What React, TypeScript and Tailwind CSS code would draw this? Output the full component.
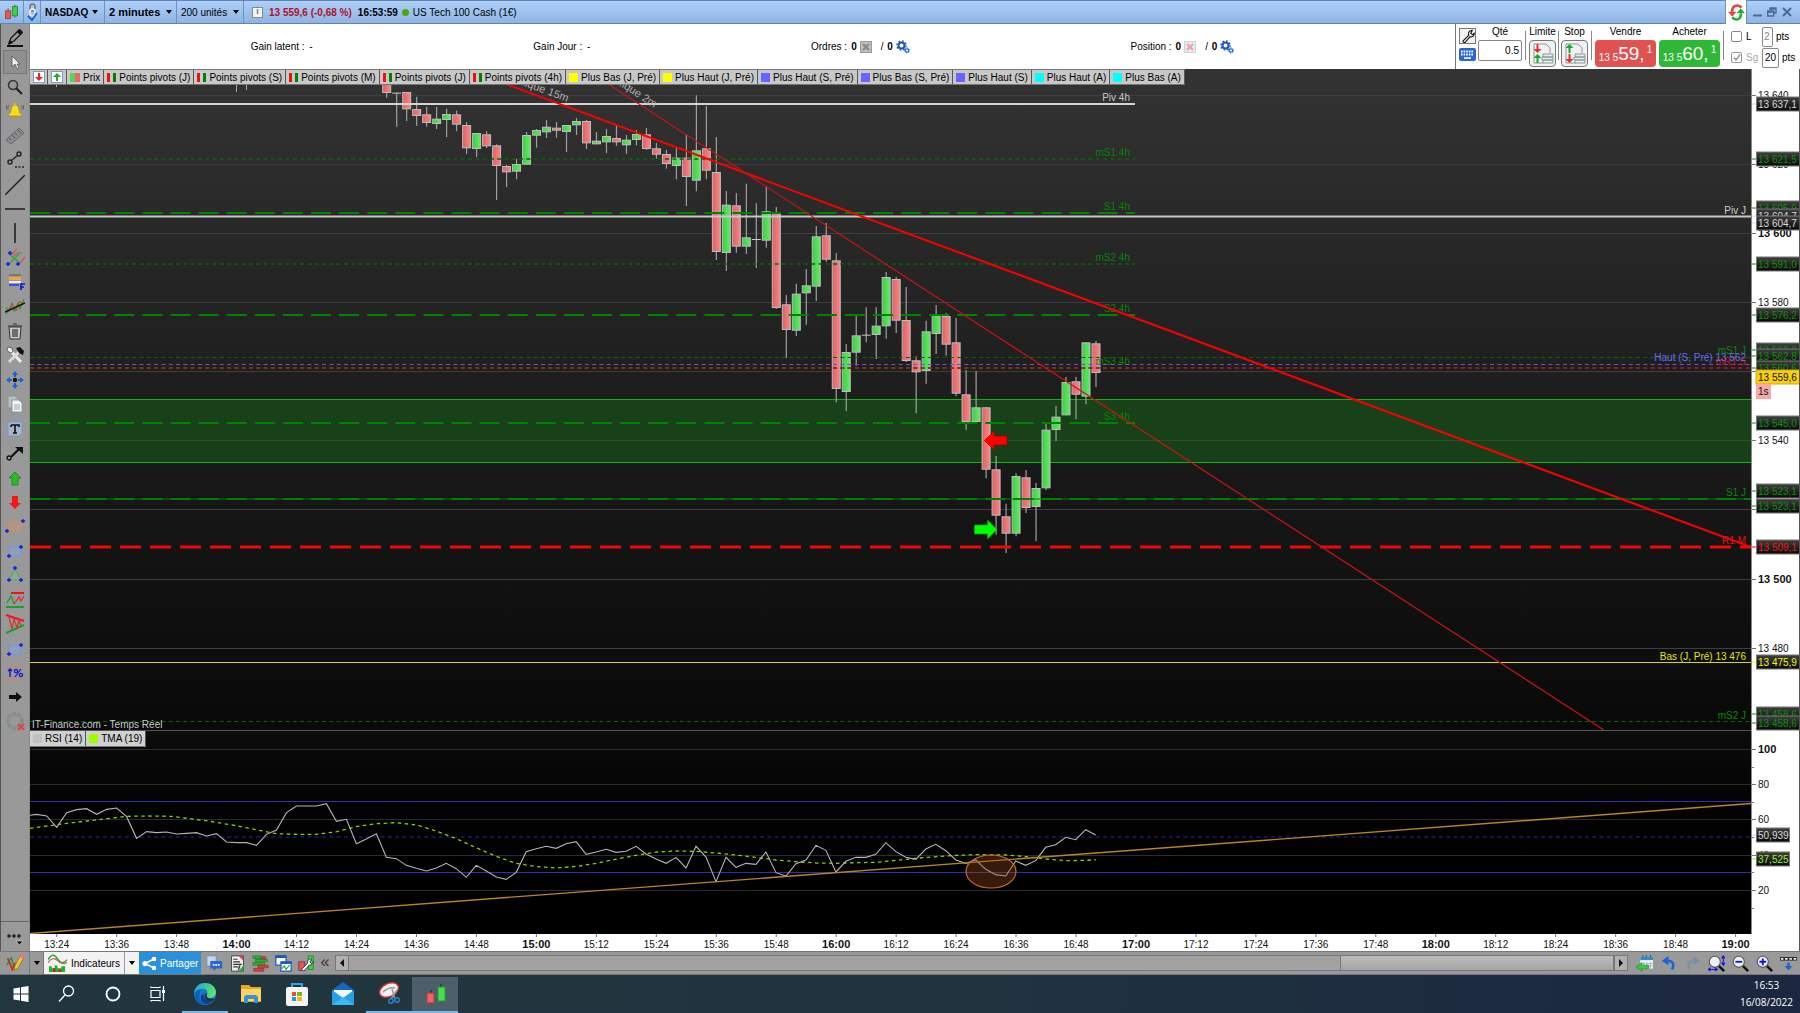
import { type ReactNode } from "react";
import clsx from "clsx";

// high, body top, body bottom, low: thirds of a pixel below the first grid row
type Candle = [number, number, number, number, "up" | "down" | "flat"];

const STEP = 9.99;
const FIRST_X = 356.7;

const candles: Candle[] = [
  [0, 0, 39, 53, "down"],
  [38, 38, 41, 140, "flat"],
  [36, 36, 88, 123, "down"],
  [50, 87, 108, 137, "down"],
  [80, 103, 129, 140, "down"],
  [80, 116, 132, 147, "up"],
  [86, 102, 120, 171, "up"],
  [92, 103, 134, 154, "down"],
  [126, 135, 205, 221, "down"],
  [159, 159, 207, 231, "up"],
  [154, 163, 199, 204, "down"],
  [193, 196, 258, 360, "down"],
  [255, 258, 277, 321, "down"],
  [237, 252, 275, 298, "up"],
  [156, 165, 254, 254, "up"],
  [147, 150, 167, 203, "up"],
  [120, 140, 157, 174, "up"],
  [126, 143, 152, 173, "down"],
  [135, 135, 156, 216, "up"],
  [114, 123, 136, 165, "up"],
  [120, 123, 190, 207, "down"],
  [156, 182, 193, 193, "up"],
  [147, 168, 187, 219, "up"],
  [135, 174, 187, 198, "down"],
  [165, 179, 196, 221, "up"],
  [150, 162, 180, 196, "up"],
  [144, 163, 207, 210, "down"],
  [189, 205, 224, 236, "down"],
  [210, 222, 252, 266, "down"],
  [203, 233, 258, 298, "up"],
  [163, 233, 291, 378, "down"],
  [46, 211, 302, 334, "up"],
  [78, 205, 272, 298, "down"],
  [171, 276, 516, 540, "down"],
  [333, 374, 519, 573, "up"],
  [339, 376, 500, 518, "down"],
  [311, 472, 500, 522, "up"],
  [370, 477, 480, 564, "flat"],
  [320, 394, 482, 503, "up"],
  [381, 400, 684, 687, "down"],
  [645, 673, 750, 835, "down"],
  [611, 641, 752, 768, "up"],
  [567, 616, 640, 734, "up"],
  [438, 469, 620, 663, "up"],
  [429, 466, 539, 545, "down"],
  [519, 541, 927, 967, "down"],
  [792, 816, 936, 993, "up"],
  [708, 766, 818, 857, "up"],
  [682, 764, 767, 787, "flat"],
  [682, 737, 765, 837, "up"],
  [576, 591, 739, 776, "up"],
  [590, 597, 722, 759, "down"],
  [621, 720, 843, 846, "down"],
  [829, 841, 877, 1000, "down"],
  [722, 754, 873, 911, "up"],
  [675, 702, 762, 822, "up"],
  [699, 708, 794, 827, "down"],
  [714, 787, 941, 949, "down"],
  [870, 943, 1026, 1050, "down"],
  [873, 982, 1026, 1026, "up"],
  [982, 982, 1169, 1195, "down"],
  [1128, 1168, 1307, 1364, "down"],
  [1271, 1309, 1361, 1419, "down"],
  [1180, 1188, 1361, 1369, "up"],
  [1170, 1192, 1284, 1299, "down"],
  [1209, 1224, 1281, 1384, "up"],
  [1032, 1049, 1225, 1231, "up"],
  [978, 1010, 1050, 1083, "up"],
  [891, 906, 1006, 1006, "up"],
  [891, 904, 944, 1018, "down"],
  [787, 787, 950, 973, "up"],
  [782, 790, 879, 921, "down"],
];

const rsi = [
  343, 348, 382, 338, 329, 326, 343, 328, 324, 350, 415, 395, 398, 396, 402,
  400, 398, 408, 401, 426, 428, 428, 436, 403, 390, 338, 318, 318, 318, 311,
  364, 358, 431, 417, 401, 472, 476, 496, 505, 513, 504, 490, 506, 532, 496,
  513, 531, 538, 517, 455, 446, 439, 445, 431, 425, 463, 456, 448, 457, 454,
  439, 462, 477, 490, 472, 504, 439, 471, 545, 472, 502, 490, 493, 456, 518,
  528, 491, 480, 436, 451, 516, 484, 472, 472, 463, 428, 455, 472, 478, 447,
  433, 452, 480, 490, 480, 508, 524, 528, 483, 496, 482, 442, 434, 412, 419,
  389, 405,
];

const tma = [
  [0, 385], [37, 370], [77, 356], [97, 349], [117, 348], [141, 349],
  [176, 362], [206, 377], [226, 389], [246, 401], [267, 403], [286, 403],
  [307, 395], [326, 380], [347, 371], [366, 368], [387, 375], [406, 393],
  [427, 417], [446, 443], [467, 470], [486, 490], [507, 500], [526, 504],
  [547, 499], [566, 490], [587, 477], [606, 466], [627, 456], [646, 453],
  [666, 454], [686, 459], [706, 465], [726, 472], [746, 480], [766, 485],
  [786, 489], [806, 490], [826, 488], [846, 487], [866, 481], [886, 475],
  [906, 470], [926, 466], [946, 464], [976, 465], [996, 470], [1016, 477],
  [1036, 482], [1056, 481], [1066, 479],
];

const gridRows = [26, 95, 164, 233, 302, 371, 440, 510, 579];

const times = [
  "13:24", "13:36", "13:48", "14:00", "14:12", "14:24", "14:36", "14:48",
  "15:00", "15:12", "15:24", "15:36", "15:48", "16:00", "16:12", "16:24",
  "16:36", "16:48", "17:00", "17:12", "17:24", "17:36", "17:48", "18:00",
  "18:12", "18:24", "18:36", "18:48", "19:00",
];

const legend = [
  { label: "Prix", kind: "candle" },
  { label: "Points pivots (J)", kind: "pivot" },
  { label: "Points pivots (S)", kind: "pivot" },
  { label: "Points pivots (M)", kind: "pivot" },
  { label: "Points pivots (J)", kind: "pivot" },
  { label: "Points pivots (4h)", kind: "pivot" },
  { label: "Plus Bas (J, Pré)", kind: "yellow" },
  { label: "Plus Haut (J, Pré)", kind: "yellow" },
  { label: "Plus Haut (S, Pré)", kind: "blue" },
  { label: "Plus Bas (S, Pré)", kind: "blue" },
  { label: "Plus Haut (S)", kind: "blue" },
  { label: "Plus Haut (A)", kind: "cyan" },
  { label: "Plus Bas (A)", kind: "cyan" },
];

// level lines of the pivots that stop at the end of the 4h session
const sessionLevels = [
  { y: 90, label: "mS1 4h", long: false },
  { y: 144, label: "S1 4h", long: true },
  { y: 195, label: "mS2 4h", long: false },
  { y: 246, label: "S2 4h", long: true },
  { y: 299, label: "mS3 4h", long: false },
  { y: 354, label: "S3 4h", long: true },
];

const priceTags = [
  { y: 35, text: "13 637,1", color: "#d8d8d8" },
  { y: 90, text: "13 621,5", color: "#0a900a" },
  { y: 139, text: "13 605,9", color: "#0a900a" },
  { y: 147, text: "13 604,7", color: "#d8d8d8" },
  { y: 154, text: "13 604,7", color: "#d8d8d8" },
  { y: 195, text: "13 591,0", color: "#0a900a" },
  { y: 246, text: "13 576,2", color: "#0a900a" },
  { y: 281, text: "13 562,8", color: "#0a900a" },
  { y: 287, text: "13 562,8", color: "#0a900a" },
  { y: 299, text: "13 560,6", color: "#0a900a" },
  { y: 354, text: "13 545,0", color: "#0a900a" },
  { y: 422, text: "13 523,1", color: "#0a900a" },
  { y: 437, text: "13 523,1", color: "#0a900a" },
  { y: 478, text: "13 509,1", color: "#f01414" },
  { y: 593, text: "13 475,9", color: "#f0f010" },
  { y: 645, text: "13 458,6", color: "#0a900a" },
  { y: 654, text: "13 458,6", color: "#0a900a" },
];

function Icon({
  children,
  size = 20,
  box = 20,
}: {
  children: ReactNode;
  size?: number;
  box?: number;
}) {
  return (
    <svg
      width={size}
      height={size}
      viewBox={`0 0 ${box} ${box}`}
      fill="none"
      className="shrink-0"
      aria-hidden="true"
    >
      {children}
    </svg>
  );
}

function Cross({ x, y }: { x: number; y: number }) {
  return (
    <path
      d={`M${x - 2} ${y}h4M${x} ${y - 2}v4`}
      stroke="#1515e8"
      strokeWidth="1.3"
    />
  );
}

const candlesIcon = (
  <>
    <path d="M6 5v13M14 1v15" stroke="#444" />
    <rect x="3" y="8" width="6" height="9" fill="#e05a60" stroke="#a83a40" />
    <rect x="11" y="3" width="6" height="11" fill="#3fd04a" stroke="#1e8a28" />
  </>
);

const rectIcon = (
  <>
    <rect x="4" y="6" width="12" height="9" fill="#8f9fb8" stroke="#6a96e8" />
    <Cross x={4} y={15} />
    <Cross x={16} y={6} />
  </>
);

const gears = (
  <Icon size={14} box={14}>
    <circle cx="5.5" cy="5.5" r="3" stroke="#1d55b8" strokeWidth="2" />
    <circle cx="5.5" cy="5.5" r="4.6" stroke="#1d55b8" strokeWidth="1.4" strokeDasharray="1.8 1.8" />
    <circle cx="11" cy="10.5" r="1.7" stroke="#2c72dc" strokeWidth="1.2" />
    <circle cx="11" cy="10.5" r="2.6" stroke="#2c72dc" strokeDasharray="1 1" />
  </Icon>
);

const tools: { name: string; icon: ReactNode }[] = [
  {
    name: "Dessin",
    icon: (
      <>
        <path d="M4 15l2-5 8-8 3 3-8 8z" stroke="#111" strokeWidth="1.3" />
        <path d="M12 4l3-3 3 3-3 3zM3 17l2-5 3 3zM2 17h16v2H2z" fill="#111" />
      </>
    ),
  },
  {
    name: "Curseur",
    icon: <path d="M7 4v11l3-3 2 5 2-1-2-4h3z" fill="#eee" stroke="#555" strokeWidth=".8" />,
  },
  {
    name: "Zoom",
    icon: (
      <>
        <circle cx="8" cy="8" r="4.5" stroke="#333" strokeWidth="1.5" />
        <path d="M11 11l6 6" stroke="#222" strokeWidth="2.2" />
      </>
    ),
  },
  {
    name: "Alerte",
    icon: (
      <>
        <path d="M3 15c0-2 3-2 3-6 0-3 2-5 4-5s4 2 4 5c0 4 3 4 3 6z" fill="#f8dc20" stroke="#a88a10" strokeWidth=".7" />
        <circle cx="10" cy="3.5" r="1.3" fill="#e8c010" />
        <path d="M8 16h4l-2 2z" fill="#e09010" />
        <path d="M4 4q-2 2-1 5M16 4q2 2 1 5M1.500 4v4M18.500 4v4" stroke="#666" />
      </>
    ),
  },
  {
    name: "Règle",
    icon: (
      <>
        <path d="M1 14L14 2l5 5L6 18z" fill="#8a8a90" stroke="#66666c" />
        <path d="M4 12l2 2M7 9l3 3M10 7l2 2M13 4l3 3" stroke="#55555c" />
      </>
    ),
  },
  {
    name: "Segment",
    icon: (
      <>
        <circle cx="5" cy="12" r="2" stroke="#222" strokeWidth="1.4" />
        <circle cx="14" cy="4" r="2" stroke="#222" strokeWidth="1.4" />
        <path d="M7 10l5-4" stroke="#222" strokeWidth="1.4" />
        <path d="M10 17h10" stroke="#222" strokeWidth="1.4" strokeDasharray="2 1.5" />
      </>
    ),
  },
  { name: "Droite", icon: <path d="M0 20L20 0" stroke="#222" strokeWidth="1.5" /> },
  { name: "Horizontale", icon: <path d="M0 10h20" stroke="#111" strokeWidth="1.4" /> },
  { name: "Verticale", icon: <path d="M10 0v20" stroke="#111" strokeWidth="1.4" /> },
  {
    name: "Fourchette",
    icon: (
      <>
        <path d="M6 7l6-6M13 17l7-8M8 9l5-5" stroke="#d85060" strokeWidth="1.2" />
        <path d="M3 17L16 4M4 6l11 9" stroke="#28a838" strokeWidth="1.3" />
        <Cross x={5} y={5} />
        <Cross x={3} y={16} />
        <Cross x={13} y={16} />
      </>
    ),
  },
  {
    name: "Fibonacci",
    icon: (
      <>
        <path d="M4 3h12" stroke="#555" />
        <path d="M4 5h12v3H4z" fill="#f0a830" />
        <path d="M4 10h12" stroke="#e8e8f8" strokeWidth="2" />
        <path d="M4 13h10" stroke="#2030d8" strokeWidth="1.4" />
        <path d="M16 18v-6h4M16 15h3" stroke="#1515d8" strokeWidth="1.7" />
      </>
    ),
  },
  {
    name: "Canal",
    icon: (
      <>
        <path d="M2 10v6l4-7 3 5 4-8 2 6 4-10" stroke="#20a030" strokeWidth="1.2" />
        <path d="M4 15l3-9 4 8 4-10 3 4" stroke="#d83838" />
        <path d="M0 15L20 6" stroke="#111" strokeWidth="1.4" />
      </>
    ),
  },
  {
    name: "Corbeille",
    icon: (
      <>
        <path d="M4 6h12l-1 12H5z" fill="#c8c8c8" stroke="#333" />
        <path d="M3 5h14M8 3h4M8 8v8M10 8v8M12 8v8" stroke="#333" strokeWidth="1.2" />
      </>
    ),
  },
  {
    name: "Outils",
    icon: (
      <>
        <path d="M5 5l11 12" stroke="#eee" strokeWidth="3" />
        <path d="M3 2l4 1 1 4-3 1-3-3z" fill="#eee" stroke="#444" strokeWidth=".7" />
        <path d="M14 7L4 17" stroke="#ddd" strokeWidth="2.6" />
        <path d="M11 3l4-1 4 4-1 4-4-2z" fill="#111" />
      </>
    ),
  },
  {
    name: "Déplacer",
    icon: (
      <>
        <path d="M10 1l3 4H7zM10 19l3-4H7zM1 10l4-3v6zM19 10l-4-3v6z" fill="#1d62d0" />
        <path d="M10 5v2M10 13v2M5 10h2M13 10h2" stroke="#1d62d0" strokeWidth="2" />
        <circle cx="10" cy="10" r="2.2" fill="#111" />
      </>
    ),
  },
  {
    name: "Copier",
    icon: (
      <>
        <path d="M3 2h7l3 3v9H3z" fill="#b8c0c4" stroke="#8a9498" />
        <path d="M7 6h7l3 3v9H7z" fill="#f4f6f8" stroke="#8a9498" />
        <path d="M9 11h6M9 13h6M9 15h6" stroke="#98a4a8" />
      </>
    ),
  },
  {
    name: "Texte",
    icon: (
      <>
        <path d="M3 3h14v11l-3 3H3z" fill="#a8b4c8" stroke="#6a96e8" />
        <path d="M6 6h8v2M10 6v8M8 14h4M6 6v2" stroke="#111" strokeWidth="1.6" />
      </>
    ),
  },
  {
    name: "Flèche",
    icon: (
      <>
        <circle cx="4" cy="15" r="2" stroke="#111" strokeWidth="1.3" />
        <path d="M6 14l8-8" stroke="#111" strokeWidth="2.2" />
        <path d="M10 4h8v7z" fill="#111" />
      </>
    ),
  },
  { name: "Hausse", icon: <path d="M10 4l6 6h-3v7H7v-7H4z" fill="#2eb82e" stroke="#1a801a" strokeWidth=".8" /> },
  { name: "Baisse", icon: <path d="M10 17l6-6h-3V4H7v7H4z" fill="#f01818" /> },
  {
    name: "Ellipse",
    icon: (
      <>
        <ellipse cx="10" cy="10" rx="8" ry="5" fill="#b09888" stroke="#e08850" />
        <Cross x={2} y={15} />
        <Cross x={18} y={5} />
      </>
    ),
  },
  { name: "Rectangle", icon: rectIcon },
  {
    name: "Triangle",
    icon: (
      <>
        <path d="M10 4l6 11H4z" fill="#90a890" stroke="#50b060" strokeWidth="1.2" />
        <Cross x={10} y={3} />
        <Cross x={4} y={15} />
        <Cross x={16} y={15} />
      </>
    ),
  },
  {
    name: "Support",
    icon: (
      <>
        <path d="M6 3h13" stroke="#e81818" strokeWidth="2" />
        <path d="M1 17h18" stroke="#18a028" strokeWidth="2" />
        <path d="M2 13l4-7 3 8" stroke="#18a028" strokeWidth="1.3" />
        <path d="M9 14l5-7 2 4 3-5" stroke="#d83030" strokeWidth="1.2" />
      </>
    ),
  },
  {
    name: "Biseau",
    icon: (
      <>
        <path d="M1 1l18 6" stroke="#e81818" strokeWidth="2" />
        <path d="M1 19l18-8" stroke="#18a028" strokeWidth="2" />
        <path d="M4 3l3 12 2-10 3 9 2-8 2 6" stroke="#d83030" strokeWidth="1.2" />
      </>
    ),
  },
  { name: "Zone", icon: rectIcon },
  {
    name: "Pourcentage",
    icon: (
      <>
        <path d="M1 4h18M1 16h18" stroke="#e07070" />
        <path d="M5 14V6M3 8l2-2 2 2" stroke="#1515d0" strokeWidth="1.4" />
        <path d="M10 14l6-8" stroke="#1515d0" strokeWidth="1.2" />
        <circle cx="11" cy="8" r="1.6" stroke="#1515d0" strokeWidth="1.2" />
        <circle cx="16" cy="12" r="1.6" stroke="#1515d0" strokeWidth="1.2" />
      </>
    ),
  },
  { name: "Suivant", icon: <path d="M4 8h7V5l6 5-6 5v-3H4z" fill="#111" /> },
  {
    name: "Réinitialiser",
    icon: (
      <>
        <circle cx="10" cy="9" r="7" stroke="#848e8e" strokeWidth="4" strokeDasharray="4 1" />
        <path d="M13 12l6 6M19 12l-6 6" stroke="#e04848" strokeWidth="2.4" />
      </>
    ),
  },
];

function Caret() {
  return (
    <span className="border-x-[3px] border-t-4 border-x-transparent border-t-black" />
  );
}

function TitleBar() {
  return (
    <header className="flex h-6 shrink-0 items-stretch border-y border-[#5f83b4] bg-gradient-to-b from-[#aed0fa] to-[#8fb3e2] text-[10px]">
      <button aria-label="Graphique" className="flex w-6 items-center justify-center border-r border-[#6d90c0]">
        <Icon size={17}>{candlesIcon}</Icon>
      </button>
      <button aria-label="Lier" className="flex w-[17px] items-center justify-center border-r border-[#6d90c0]">
        <svg width="12" height="18" viewBox="0 0 12 18" fill="none">
          <rect x="4" y="1" width="5" height="7" rx="2.5" stroke="#777" strokeWidth="1.6" />
          <rect x="4" y="6" width="5" height="7" rx="2.5" stroke="#eee" strokeWidth="1.6" />
          <path d="M2 13l4 4 5-7" stroke="#1d62d0" strokeWidth="2" />
        </svg>
      </button>
      <button className="flex w-16 items-center justify-between border-r border-[#6d90c0] pr-1.5 pl-1 font-bold">
        NASDAQ <Caret />
      </button>
      <button className="flex w-[72px] items-center justify-between border-r border-[#6d90c0] pr-1 pl-1 text-[11px] font-bold">
        2 minutes <Caret />
      </button>
      <button className="flex w-[67px] items-center justify-between border-r border-[#6d90c0] pr-1 pl-1">
        200 unités <Caret />
      </button>
      <div className="flex items-center pl-2">
        <span className="mr-1.5 flex h-[11px] w-[11px] items-center justify-center border border-[#8a8a8a] bg-[#f4f4f4] text-[9px] font-bold text-[#777]">
          i
        </span>
        <span className="font-bold text-[#b0102a]">13 559,6 (-0,68 %)</span>
        <span className="ml-1.5 font-bold">16:53:59</span>
        <span className="mx-1 h-[7px] w-[7px] rounded-full bg-[#4ca80c]" />
        <span>US Tech 100 Cash (1€)</span>
      </div>
      <div className="-my-px ml-auto flex w-[22px] items-center justify-center border-x border-[#6d90c0] bg-white">
        <Icon size={17}>
          <path d="M16 4C10-1 4 3 5 10" stroke="#e04848" strokeWidth="3" />
          <path d="M0 9h10l-5 6z" fill="#e04848" />
          <path d="M5 16c6 5 11 1 10-5" stroke="#20b030" strokeWidth="3" />
          <path d="M10 11h10l-5-6z" fill="#20b030" />
        </Icon>
      </div>
      <div className="flex w-[53px] items-center justify-around pr-1.5 pl-1">
        <button aria-label="Réduire">
          <Icon size={10} box={10}><path d="M0 8.500h9" stroke="#4a6a98" strokeWidth="2" /></Icon>
        </button>
        <button aria-label="Restaurer">
          <Icon size={10} box={10}>
            <path d="M3 3V1h6v5H7M3 2h6" stroke="#4a6a98" strokeWidth="1.4" />
            <path d="M.7 4h6v5h-6zM1 5h6" stroke="#4a6a98" strokeWidth="1.4" />
          </Icon>
        </button>
        <button aria-label="Fermer">
          <Icon size={10} box={10}><path d="M1 1l8 8M9 1L1 9" stroke="#4a6a98" strokeWidth="2" /></Icon>
        </button>
      </div>
    </header>
  );
}

function Sidebar() {
  return (
    <aside className="flex w-[30px] shrink-0 flex-col border-r border-l border-r-[#888] border-l-[#555] bg-[#999]">
      <div className="mt-0.5 flex h-[708px] flex-col items-center justify-between">
        {tools.map((tool, i) => (
          <button
            key={tool.name}
            aria-label={tool.name}
            className={clsx(
              "flex h-6 w-6 items-center justify-center",
              i === 1 && "border border-[#777] bg-[#8f8f8f]"
            )}
          >
            <Icon>{tool.icon}</Icon>
          </button>
        ))}
      </div>
      <button
        aria-label="Plus d'outils"
        className="mt-auto flex h-[30px] items-center justify-center border-t border-[#666]"
      >
        <Icon>
          <circle cx="4" cy="9" r="1.800" fill="#222" />
          <circle cx="9" cy="9" r="1.800" fill="#222" />
          <circle cx="14" cy="9" r="1.800" fill="#222" />
          <path d="M11 14h7l-3.500 4z" fill="#111" stroke="#ddd" strokeWidth=".6" />
        </Icon>
      </button>
    </aside>
  );
}

function OrderIcon({ top, bottom, flip }: { top: string; bottom: string; flip?: boolean }) {
  return (
    <Icon size={22} box={22}>
      <path d="M10 1h4l4 4v5M10 1H2v19h10" stroke="#8a9a9a" />
      <path d={flip ? "M5.500 1l4 4h-3v5h-2V5h-3z" : "M5.500 10l4-4h-3V1h-2v5h-3z"} fill={top} />
      <path d={flip ? "M5.500 20l4-4h-3v-5h-2v5h-3z" : "M5.500 11l4 4h-3v5h-2v-5h-3z"} fill={bottom} />
      <path d="M11 11h10v3H11zM10 14h11v3H10zM11 17h10v3H11z" fill="#e8eeee" stroke="#8a9a9a" />
    </Icon>
  );
}

function QuoteButton({ label, big, color }: { label: string; big: string; color: string }) {
  return (
    <div className="flex flex-col items-center">
      <span className="leading-4">{label}</span>
      <button
        aria-label={label}
        className={clsx(
          "flex h-[27px] w-[61px] items-center justify-center rounded-sm text-white",
          color
        )}
      >
        <span className="pt-2 text-[10px] leading-3">13 5</span>
        <span className="text-[19px] leading-6">{big}</span>
        <span className="pb-2 pl-0.5 text-[10px] leading-3">1</span>
      </button>
    </div>
  );
}

function CloseMark({ muted }: { muted?: boolean }) {
  return (
    <Icon size={12} box={12}>
      <rect x=".5" y=".5" width="11" height="11" fill={muted ? "#c0c0b8" : "#e8eef2"} stroke={muted ? "#999" : "#c8d4dc"} />
      <path d="M3 3l6 6M9 3L3 9" stroke={muted ? "#888" : "#f4a0a0"} strokeWidth="2.200" />
    </Icon>
  );
}

function AccountBar() {
  return (
    <div className="flex h-[45px] shrink-0 bg-white text-[10px]">
      <div className="flex flex-1 items-center justify-evenly">
        <p>
          Gain latent : <span className="pl-0.5">-</span>
        </p>
        <p>
          Gain Jour : <span className="pl-0.5">-</span>
        </p>
        <p className="flex items-center gap-[3px]">
          Ordres : <b className="pl-px">0</b>
          <CloseMark muted />
          <span className="pl-1.5">
            / <b className="pl-px">0</b>
          </span>
          {gears}
        </p>
        <p className="flex items-center gap-[3px]">
          Position : <b className="pl-px">0</b>
          <CloseMark />
          <span className="pl-1.5">
            / <b className="pl-px">0</b>
          </span>
          {gears}
        </p>
      </div>
      <div className="flex w-[345px] border-l border-[#777] pl-[3px]">
        <div className="flex flex-col gap-1 pt-1">
          <button aria-label="Réglages" className="flex h-4 w-[17px] items-center justify-center border border-[#777] bg-[#f4f4f4]">
            <Icon size={14}>
              <path d="M3 17l8-8c-1-4 1-7 5-7l-2 4 2 2 3-2c0 4-3 6-6 5l-7 8c-2 1-4-1-3-2z" stroke="#111" strokeWidth="1.600" />
            </Icon>
          </button>
          <button aria-label="Clavier" className="flex h-[13px] w-[17px] items-center justify-center rounded-xs bg-[#2c66d0]">
            <Icon size={15} box={15}>
              <path d="M1 4.500h13M1 7.500h13" stroke="#fff" strokeWidth="1.800" strokeDasharray="1.600 1" />
              <path d="M4 11h7" stroke="#fff" strokeWidth="1.600" />
            </Icon>
          </button>
        </div>
        <label className="ml-0.5 flex w-11 flex-col items-center">
          <span className="leading-4">Qté</span>
          <input defaultValue="0.5" className="h-[21px] w-full rounded-xs border border-[#888] px-0.5 text-right" />
        </label>
        <div className="mx-[3px] mt-[7px] h-[29px] w-px bg-[#888]" />
        <div className="flex w-[27px] flex-col items-center">
          <span className="leading-4">Limite</span>
          <button aria-label="Limite" className="flex h-[27px] w-[27px] items-center justify-center rounded-sm border border-[#777] bg-[#f2f2f2]">
            <OrderIcon top="#e03030" bottom="#18a828" />
          </button>
        </div>
        <div className="mx-0.5 mt-[7px] h-[29px] w-px bg-[#888]" />
        <div className="flex w-[27px] flex-col items-center">
          <span className="leading-4">Stop</span>
          <button aria-label="Stop" className="flex h-[27px] w-[27px] items-center justify-center rounded-sm border border-[#777] bg-[#f2f2f2]">
            <OrderIcon top="#18a828" bottom="#e03030" flip />
          </button>
        </div>
        <div className="mx-[3px] mt-[7px] h-[29px] w-px bg-[#888]" />
        <div className="flex gap-[3px]">
          <QuoteButton label="Vendre" big="59," color="bg-[#e05252]" />
          <QuoteButton label="Acheter" big="60," color="bg-[#2eb835]" />
        </div>
        <div className="mx-[3px] mt-[7px] h-[29px] w-px bg-[#888]" />
        <div className="ml-1 flex flex-col pt-0.5">
          <div className="flex h-[21px] items-center">
            <label className="flex w-[31px] items-center gap-1">
              <input type="checkbox" className="h-[11px] w-[11px] appearance-none rounded-xs border border-[#888] bg-white" />
              L
            </label>
            <input aria-label="Points limite" defaultValue="2" className="h-5 w-[11px] rounded-xs border border-[#888] pl-px text-[#888]" />
            <span className="pl-[3px]">pts</span>
          </div>
          <div className="flex h-[21px] items-center">
            <label className="flex w-[31px] items-center gap-1 text-[#aaa]">
              <span className="relative flex">
                <input type="checkbox" defaultChecked className="h-[11px] w-[11px] appearance-none rounded-xs border border-[#999] bg-white" />
                <svg viewBox="0 0 11 11" className="pointer-events-none absolute inset-0" fill="none">
                  <path d="M3 5.500l2 2.500 4-5.500" stroke="#999" strokeWidth="1.600" />
                </svg>
              </span>
              Sg
            </label>
            <input aria-label="Points stop" defaultValue="20" className="h-5 w-[17px] rounded-xs border border-[#888] pl-0.5" />
            <span className="pl-[3px]">pts</span>
          </div>
        </div>
      </div>
    </div>
  );
}

function Swatch({ kind }: { kind: string }) {
  if (kind === "candle" || kind === "pivot") {
    return (
      <span className={clsx("flex h-[9px]", kind === "pivot" ? "w-[9px] justify-between" : "w-2.5")}>
        <span className={kind === "pivot" ? "w-[3px] bg-[#f01010]" : "w-[5px] bg-[#50d850]"} />
        <span className={kind === "pivot" ? "w-[3px] bg-[#008000]" : "w-[5px] bg-[#e86868]"} />
      </span>
    );
  }
  return (
    <span
      className={clsx(
        "h-[9px] w-[9px]",
        kind === "yellow" && "bg-[#ffff00]",
        kind === "blue" && "bg-[#6666ff]",
        kind === "cyan" && "bg-[#00ffff]",
        kind === "silver" && "bg-[#c0c0c0]",
        kind === "lime" && "bg-[#99ff00]"
      )}
    />
  );
}

function LegendItem({ label, kind }: { label: string; kind: string }) {
  return (
    <span className="flex items-center gap-[3px] border-r border-[#555] px-[3px] whitespace-nowrap">
      <Swatch kind={kind} />
      {label}
    </span>
  );
}

function AxisTag({ y, text, color, width = 44 }: { y: number; text: string; color: string; width?: number }) {
  return (
    <g>
      <path d={`M0 ${y}h4`} stroke={color} />
      <rect x="4.500" y={y - 7} width={width - 1} height="14" fill="url(#tag)" stroke="#777" />
      <text x="6" y={y + 4} fill={color}>
        {text}
      </text>
    </g>
  );
}

function PriceChart() {
  return (
    <section className="flex min-h-0 flex-1">
      <div className="relative flex-1 overflow-hidden border-b border-[#555] bg-gradient-to-b from-[#333] to-[#090909]">
        <svg className="absolute inset-0 h-full w-full text-[10px]" fill="none">
          {gridRows.map((y) => (
            <line key={y} x1="0" x2="100%" y1={y + 0.5} y2={y + 0.5} stroke="#3d3d45" />
          ))}
          <rect x="0" y="330" width="100%" height="64" fill="#16601a" fillOpacity=".55" />
          <line x1="0" x2="100%" y1="330.500" y2="330.500" stroke="#10b410" strokeWidth="1.200" />
          <line x1="0" x2="100%" y1="393.500" y2="393.500" stroke="#10b410" strokeWidth="1.200" />

          <path d="M26.500 16v2M206.500 16v7M216.500 16v5" stroke="#aaa" />
          {candles.map(([high, top, bottom, low, dir], i) => {
            const x = FIRST_X + i * STEP;
            const y = (v: number) => 11 + v / 3;
            return (
              <g key={i}>
                <line x1={x} x2={x} y1={y(high)} y2={y(low)} stroke="#a0a0a0" strokeWidth="1.200" />
                {dir === "flat" ? (
                  <rect x={x - 4.5} y={y(top)} width="9" height="1" fill="#c8c8c8" />
                ) : (
                  <rect
                    x={x - 4}
                    y={y(top) + 0.5}
                    width="8"
                    height={y(bottom) - y(top) - 1}
                    fill={dir === "up" ? "url(#up)" : "url(#down)"}
                    stroke="#bdbdbd"
                  />
                )}
              </g>
            );
          })}

          <line x1="0" x2="1105" y1="35" y2="35" stroke="#d4d4d4" strokeWidth="2" />
          <line x1="0" x2="100%" y1="147.500" y2="147.500" stroke="#c8c8c8" strokeWidth="2" />
          {sessionLevels.map(({ y, label, long }) => (
            <g key={label}>
              <line
                x1="0"
                x2="1105"
                y1={y}
                y2={y}
                stroke={long ? "#008400" : "#0a640a"}
                strokeWidth={long ? 2 : 1.5}
                strokeDasharray={long ? "20 8.1" : "4 3.3"}
              />
              <text x="1100" y={y - 3} textAnchor="end" fill="#088008">
                {label}
              </text>
            </g>
          ))}
          <line x1="0" x2="100%" y1="288.500" y2="288.500" stroke="#0a640a" strokeDasharray="4 3.3" />
          <line x1="0" x2="100%" y1="295.500" y2="295.500" stroke="#5a5ae0" strokeDasharray="4 3.3" />
          <line x1="0" x2="100%" y1="299" y2="299" stroke="#b81c0c" strokeWidth="1.500" strokeDasharray="4 3.3" />
          <line x1="0" x2="100%" y1="430" y2="430" stroke="#008000" />
          <line x1="0" x2="100%" y1="430" y2="430" stroke="#008000" strokeWidth="2" strokeDasharray="20 8.1" />
          <line x1="0" x2="100%" y1="478" y2="478" stroke="#f00808" strokeWidth="3" strokeDasharray="21 9" />
          <line x1="0" x2="100%" y1="593.500" y2="593.500" stroke="#d8d808" />
          <line x1="0" x2="100%" y1="652.500" y2="652.500" stroke="#0a640a" strokeDasharray="4 3.3" />

          <path d="M435 -0.300L1722 478.500" stroke="#f80000" strokeWidth="2" />
          <path d="M555 0L1573.700 661" stroke="#c81414" strokeWidth="1.200" />
          <text x="537" y="33" textAnchor="end" fill="#b0b0b0" transform="rotate(20.4 537 33)" className="text-[11px]">
            Oblique 15m
          </text>
          <text x="624" y="39" textAnchor="end" fill="#b0b0b0" transform="rotate(33 624 39)" className="text-[11px]">
            Oblique 2m
          </text>

          <path d="M954.500 371.500l9.500-9.500v5h13v9h-13v5z" fill="#ff0000" stroke="#a00000" strokeWidth=".7" />
          <path d="M967 460.500l-9.500-9.500v5h-13v9h13v5z" fill="#00ff00" stroke="#00a000" strokeWidth=".7" />

          <text x="1100" y="32" textAnchor="end" fill="#c8c8c8">Piv 4h</text>
          <svg x="100%" overflow="visible">
            <g textAnchor="end">
              <text x="-5" y="145" fill="#d0d0d0">Piv J</text>
              <text x="-5" y="285" fill="#088808">mS1 J</text>
              <text x="-5" y="296" fill="#d01414">mR1 S</text>
              <text x="-5" y="292" fill="#6a6af8">Haut (S, Pré) 13 562</text>
              <text x="-5" y="427" fill="#088808">S1 J</text>
              <text x="-5" y="475" fill="#e01010">R1 M</text>
              <text x="-5" y="591" fill="#e4e408">Bas (J, Pré) 13 476</text>
              <text x="-5" y="650" fill="#088808">mS2 J</text>
            </g>
          </svg>
          <text x="2" y="659" fill="#c8c8c8">IT-Finance.com - Temps Réel</text>
          <defs>
            <linearGradient id="up">
              <stop offset="0" stopColor="#3ccf46" />
              <stop offset="1" stopColor="#66e866" />
            </linearGradient>
            <linearGradient id="down">
              <stop offset="0" stopColor="#e25f64" />
              <stop offset="1" stopColor="#f28a88" />
            </linearGradient>
          </defs>
        </svg>
        <div className="absolute top-0 left-0 flex h-4 border-y border-[#777] bg-[#c8c8c8] text-[10px]">
          <button aria-label="Vers le bas" className="flex w-[18px] items-center justify-center border-r border-[#555]">
            <Icon size={12} box={12}>
              <rect x=".5" y=".5" width="11" height="11" fill="#fff" stroke="#7aa0c8" />
              <path d="M5 2h2v4h3l-4 4-4-4h3z" fill="#e02828" />
            </Icon>
          </button>
          <button aria-label="Vers le haut" className="flex w-[19px] items-center justify-center border-r border-[#555]">
            <Icon size={12} box={12}>
              <rect x=".5" y=".5" width="11" height="11" fill="#fff" stroke="#7aa0c8" />
              <path d="M5 10h2V6h3L6 2 2 6h3z" fill="#18b028" />
            </Icon>
          </button>
          {legend.map((item, i) => (
            <LegendItem key={i} {...item} />
          ))}
        </div>
      </div>
      <div className="relative w-[49px] shrink-0 border-r border-l border-r-[#555] border-l-[#888] bg-white">
        <svg className="absolute inset-0 h-full w-full text-[10px]" fill="none">
          {gridRows.map((y, i) => (
            <g key={y}>
              <path d={`M0 ${y + 0.5}h4`} stroke="#777" />
              <text
                x="6"
                y={y + 4}
                fill="#111"
                className={clsx(i % 5 === 2 && "text-[11px] font-bold")}
              >
                {`13 ${640 - i * 20}`}
              </text>
            </g>
          ))}
          {priceTags.map((tag, i) => (
            <AxisTag key={i} {...tag} />
          ))}
          <rect x="4" y="301" width="44" height="14" fill="#f8d010" stroke="#d8a808" />
          <text x="6" y="312" fill="#111">13 559,6</text>
          <rect x="4" y="315" width="15" height="15" fill="#f8a8a8" />
          <text x="6" y="326" fill="#111">1s</text>
          <defs>
            <linearGradient id="tag" x2="0" y2="1">
              <stop offset="0" stopColor="#404040" />
              <stop offset="1" stopColor="#080808" />
            </linearGradient>
          </defs>
        </svg>
      </div>
    </section>
  );
}

function RsiChart() {
  const y = (v: number) => v / 3 - 31;
  const rsiPath =
    "M0 84.300" + rsi.map((v, i) => `L${6.7 + i * STEP} ${y(v)}`).join("");
  const tmaPath = "M" + tma.map(([x, v]) => `${x} ${y(v)}`).join("L");

  return (
    <section className="flex h-[203px] shrink-0">
      <div className="relative flex-1 overflow-hidden bg-gradient-to-b from-[#0c0c0c] to-black">
        <svg className="absolute inset-0 h-full w-full" fill="none">
          {[18, 53, 88, 124, 159].map((row) => (
            <line key={row} x1="0" x2="100%" y1={row + 0.5} y2={row + 0.5} stroke="#2b2b30" />
          ))}
          <line x1="0" x2="100%" y1="70.500" y2="70.500" stroke="#2e2eb0" />
          <line x1="0" x2="100%" y1="106" y2="106" stroke="#2a2a98" strokeWidth="1.200" strokeDasharray="4 3.3" />
          <line x1="0" x2="100%" y1="141.500" y2="141.500" stroke="#2e2eb0" />
          <path d={tmaPath} stroke="#84d400" strokeWidth="1.300" strokeDasharray="3.500 3.500" />
          <path d={rsiPath} stroke="#b4b4b4" strokeWidth="1.100" />
          <path d="M0 202.500L1722 72.500" stroke="#b8842c" strokeWidth="1.400" />
          <ellipse cx="961" cy="140.500" rx="25" ry="16.500" fill="#a04a18" fillOpacity=".35" stroke="#c06a3c" strokeWidth="1.200" />
        </svg>
        <div className="absolute top-0 left-0 flex h-4 border-b border-[#777] bg-[#d0d0d0] text-[10px]">
          <LegendItem label="RSI (14)" kind="silver" />
          <LegendItem label="TMA (19)" kind="lime" />
        </div>
      </div>
      <div className="relative w-[49px] shrink-0 border-r border-l border-r-[#555] border-l-[#888] bg-white">
        <svg className="absolute inset-0 h-full w-full text-[10px]" fill="none">
          <path d="M0 18.500h4M0 53.500h4M0 88.500h4M0 124.500h4M0 159.500h4M0 36.500h2M0 71.500h2M0 106.500h2M0 141.500h2M0 177.500h2" stroke="#777" />
          <text x="6" y="22" fill="#111" className="text-[11px] font-bold">100</text>
          <text x="6" y="57" fill="#111">80</text>
          <text x="6" y="92" fill="#111">60</text>
          <text x="6" y="128" fill="#111">40</text>
          <text x="6" y="163" fill="#111">20</text>
          <AxisTag y={104} text="50,939" color="#d8d8d8" width={34} />
          <AxisTag y={128} text="37,525" color="#99f010" width={34} />
        </svg>
      </div>
    </section>
  );
}

function TimeAxis() {
  return (
    <div className="h-[17px] shrink-0 border-r border-[#555] bg-white">
      <svg className="block h-full w-full text-[10px]" textAnchor="middle">
        {times.map((time, i) => {
          const x = 26.7 + i * 59.96;
          return (
            <g key={time}>
              <path d={`M${x} 0v3`} stroke="#777" />
              <text x={x} y="14" fill="#111" className={clsx(time.endsWith(":00") && "text-[11px] font-bold")}>
                {time}
              </text>
            </g>
          );
        })}
      </svg>
    </div>
  );
}

function ToolIcon({ name, children }: { name: string; children: ReactNode }) {
  return (
    <button aria-label={name} className="flex h-5 w-[17px] items-center justify-center">
      <Icon size={17}>{children}</Icon>
    </button>
  );
}

const lens = (
  <>
    <circle cx="8" cy="8" r="6.500" fill="#eef2f8" stroke="#555" strokeWidth="1.300" />
    <path d="M13 13l6 6" stroke="#111" strokeWidth="3" />
  </>
);

function Toolbar() {
  return (
    <div className="flex h-6 shrink-0 items-stretch border-y border-[#777] bg-[#999] text-[10px]">
      <button aria-label="Outils de dessin" className="flex w-[30px] items-center justify-center border-r border-[#777]">
        <Icon size={18}>
          <path d="M2 5l5 12 3-7" stroke="#d82828" strokeWidth="2.200" />
          <path d="M1 12l5-8 4 14" stroke="#1c8a2c" strokeWidth="1.300" />
          <path d="M9 18l1-5 6-11 4 2-7 12z" fill="#f4c838" stroke="#8a6a10" strokeWidth=".8" />
          <path d="M15 3l2-3 4 2-2 4z" fill="#e87878" />
        </Icon>
      </button>
      <button aria-label="Choisir un outil" className="flex w-3.5 items-center justify-center border-r border-[#777]">
        <Caret />
      </button>
      <button className="flex w-[81px] items-center gap-1 border-r border-[#999] bg-[#f2f2f2] pl-1">
        <Icon size={19}>
          <path d="M0 6Q5-3 10 5T20 6" stroke="#28a838" strokeWidth="1.500" />
          <path d="M0 9Q5 2 10 7T20 9" stroke="#d06060" strokeWidth="1.300" />
          <path d="M1 13h3v2h3v-3h3v3h4v-2h4v6H1z" fill="#18b828" />
          <path d="M5 15h3v4H5zM11 16h3v3h-3z" fill="#d82020" />
        </Icon>
        Indicateurs
      </button>
      <button aria-label="Liste des indicateurs" className="flex w-3.5 items-center justify-center bg-[#f2f2f2]">
        <Caret />
      </button>
      <button className="flex w-[62px] items-center gap-[3px] bg-[#2c90d8] pl-[3px] text-white">
        <Icon size={15}>
          <path d="M16 4L4 10l12 6" stroke="#fff" strokeWidth="2" />
          <circle cx="16" cy="4" r="3" fill="#fff" />
          <circle cx="4" cy="10" r="3.500" fill="#fff" />
          <circle cx="16" cy="16" r="3" fill="#fff" />
        </Icon>
        Partager
      </button>
      <div className="flex items-center gap-1.5 pl-[5px]">
        <ToolIcon name="Messages">
          <path d="M1 1h11v12H1z" fill="#c8d8ec" stroke="#6a8cc0" />
          <path d="M5 7h14v9h-7l-3 3v-3H5z" fill="#2a66d0" />
          <path d="M8 11.500h8" stroke="#fff" strokeWidth="2" strokeDasharray="2 1" />
        </ToolIcon>
        <ToolIcon name="Ordres">
          <path d="M3 1h14v18H3z" fill="#f0f0f0" stroke="#333" />
          <path d="M11 1h6v6z" fill="#e04050" />
          <path d="M5 5h5M5 8h8M5 11h10M5 14h6M13 12l-2 6" stroke="#333" strokeWidth="1.400" />
          <path d="M11 19l6-7v7z" fill="#28a838" />
        </ToolIcon>
        <ToolIcon name="Carnet">
          <path d="M1 1h10v3H1zM4 5h14v3H4zM1 9h14v3H1z" fill="#28b838" stroke="#14701c" strokeWidth=".7" />
          <path d="M7 12h12v3H7zM2 16h12v3H2zM11 2h5v3h-5z" fill="#e04040" stroke="#902020" strokeWidth=".7" />
        </ToolIcon>
        <ToolIcon name="Fenêtres">
          <path d="M1 1h12v11H1z" fill="#fff" stroke="#1c58c0" strokeWidth="1.500" />
          <path d="M7 8h12v11H7z" fill="#fff" stroke="#1c58c0" strokeWidth="1.500" />
          <path d="M1 2h12M7 9h12" stroke="#1c58c0" strokeWidth="3" />
          <path d="M8 16l3-3 2 4 4-5" stroke="#28a838" strokeWidth="1.400" />
        </ToolIcon>
        <ToolIcon name="Paramètres">
          <path d="M1 8h7v10H1z" fill="#e05a60" stroke="#802a30" />
          <path d="M12 1h6v16h-6z" fill="#3fd04a" stroke="#1e8a28" />
          <path d="M4 17l7-7c0-4 2-6 5-5l-2 3 2 2 2-2c0 3-2 4-5 4l-6 7z" fill="#fff" stroke="#222" />
        </ToolIcon>
      </div>
      <span className="w-5 text-center text-base leading-5 text-[#333]">«</span>
      <button aria-label="Défiler à gauche" className="my-[3px] flex w-3.5 items-center justify-center border border-[#777] bg-[#b0b0b0]">
        <Icon size={8} box={8}><path d="M6 0v8L2 4z" fill="#111" /></Icon>
      </button>
      <div className="my-[3px] flex flex-1 justify-end border-y border-[#777] bg-[#a2a2a2]">
        <div className="w-[21.7%] border-x border-[#777] bg-gradient-to-b from-[#bcbcbc] to-[#a4a4a4]" />
      </div>
      <button aria-label="Défiler à droite" className="my-[3px] flex w-3.5 items-center justify-center border border-[#777] bg-[#b0b0b0]">
        <Icon size={8} box={8}><path d="M2 0v8l4-4z" fill="#111" /></Icon>
      </button>
      <div className="flex items-center gap-[7px] pr-[3px] pl-2">
        <ToolIcon name="Aller à la date">
          <path d="M5 2h15v14H5z" fill="#eef4fa" />
          <path d="M5 2h15v4H5z" fill="#3a8cc8" />
          <path d="M8 0v3M12 0v3M17 0v3" stroke="#28648c" strokeWidth="1.500" />
          <path d="M9 8v8M13 8v8M17 8v8M6 10h14M6 13h14" stroke="#98a8b8" strokeWidth=".8" />
          <path d="M0 14l7-5v3h8v4H7v3z" fill="#38c840" stroke="#1c8024" strokeWidth=".7" />
        </ToolIcon>
        <ToolIcon name="Annuler">
          <path d="M7 7c7-1 11 3 7 10" stroke="#1c62d8" strokeWidth="3" />
          <path d="M2 7l8-6v11z" fill="#1c62d8" />
        </ToolIcon>
        <ToolIcon name="Rétablir">
          <path d="M14 7C7 6 3 10 7 17" stroke="#7890a8" strokeWidth="3" />
          <path d="M19 7l-8-6v11z" fill="#7890a8" />
        </ToolIcon>
        <ToolIcon name="Zoom automatique">
          {lens}
          <path d="M18 2v9M16 4l2-3 2 3M16 9l2 3 2-3M1 17h9M3 15l-3 2 3 2M8 15l3 2-3 2" stroke="#1515e0" strokeWidth="1.300" />
        </ToolIcon>
        <ToolIcon name="Zoom arrière">
          {lens}
          <path d="M4 8h8" stroke="#1515e0" strokeWidth="2.200" />
        </ToolIcon>
        <ToolIcon name="Zoom avant">
          {lens}
          <path d="M4 8h8M8 4v8" stroke="#1515e0" strokeWidth="2.200" />
        </ToolIcon>
        <ToolIcon name="Réduire les barres">
          <path d="M0 4.500h20" stroke="#222" strokeWidth="4" />
          <path d="M1 4.500h19" stroke="#eee" strokeWidth="2" strokeDasharray="3 2" />
          <path d="M8.500 9h3v4h3l-4.500 5-4.500-5h3z" fill="#1c62d8" />
        </ToolIcon>
      </div>
    </div>
  );
}

function TaskButton({
  name,
  open,
  active,
  children,
}: {
  name: string;
  open?: boolean;
  active?: boolean;
  children: ReactNode;
}) {
  return (
    <button
      aria-label={name}
      className={clsx(
        "flex w-[46px] items-center justify-center border-b-2",
        open ? "border-[#76b9ed]" : "border-transparent",
        active && "bg-[#4c5f6b]"
      )}
    >
      <Icon size={24} box={24}>{children}</Icon>
    </button>
  );
}

function Taskbar() {
  return (
    <footer className="flex h-[38px] shrink-0 items-stretch bg-gradient-to-r from-[#22363f] via-[#20343f] to-[#1b2740]">
      <div className="-ml-0.5 flex pt-0.5">
        <TaskButton name="Démarrer">
          <path d="M4.500 6.500l6.500-1v6H4.500zM12 5.300L19.500 4v7.500H12zM4.500 12.500H11v6l-6.500-1zM12 12.500h7.500V20L12 18.700z" fill="#fff" />
        </TaskButton>
        <TaskButton name="Rechercher">
          <circle cx="13.500" cy="9" r="5" stroke="#fff" strokeWidth="1.300" />
          <path d="M10 13l-6 6.500" stroke="#fff" strokeWidth="1.300" />
        </TaskButton>
        <TaskButton name="Cortana">
          <circle cx="12" cy="12" r="6.500" stroke="#fff" strokeWidth="1.800" />
        </TaskButton>
        <TaskButton name="Vue des tâches">
          <path d="M4 8.500h9v7H4zM4 6V4.500M13 6V4.500M4 5.500h9M4 18.500h9M4 18v1.500M13 18v1.500M16.500 4v15" stroke="#fff" strokeWidth="1.200" />
          <path d="M15 8h3v3h-3z" fill="#fff" />
        </TaskButton>
        <TaskButton name="Edge" open>
          <defs>
            <linearGradient id="edgeTop" x1="0" x2="1" y2=".3">
              <stop offset="0" stopColor="#20a0e8" />
              <stop offset="1" stopColor="#5ce06a" />
            </linearGradient>
          </defs>
          <circle cx="12" cy="12" r="11" fill="#1778cc" />
          <path d="M1 11C2 4 7 1 12 1c7 0 11 5 11 9 0 4-3 6-6 6-3 0-4-1-3-3 2-4-2-7-6-6-4 0-6 2-7 4z" fill="url(#edgeTop)" />
          <path d="M8 8c-4 6-1 13 5 14.500-4 .5-9-1-11-6C1 12 4 8 8 8z" fill="#1060b8" />
          <path d="M11 11c-2 5 3 9 10 6-3 5-8 6-11 4-3-3-3-8 1-10z" fill="#0c3f8c" />
          <path d="M14 12c-1 3 1 5 5 4.500 2-.2 3 0 2.500 1-3 3-10 1-10-4 .5-2 1.500-3 2.500-1.500z" fill="#22363f" />
        </TaskButton>
        <TaskButton name="Explorateur">
          <path d="M2 3h8l2 2h10v15H2z" fill="#e8a820" />
          <path d="M2 7h20v12H2z" fill="#fcd462" />
          <path d="M5 21v-6l2-2h10l2 2v6h-4v-4H9v4z" fill="#3c90d8" />
        </TaskButton>
        <TaskButton name="Store">
          <path d="M7 6V2h10v4" stroke="#28a8e8" strokeWidth="2" />
          <rect x="1" y="5" width="22" height="19" rx="2" fill="#f4f4f4" />
          <path d="M7 10h4v4H7z" fill="#f05028" />
          <path d="M12 10h5v4h-5z" fill="#7cb810" />
          <path d="M7 15h4v4H7z" fill="#10a0e8" />
          <path d="M12 15h5v4h-5z" fill="#fcb808" />
        </TaskButton>
        <TaskButton name="Courrier">
          <path d="M1 8l11-8 11 8v15H1z" fill="#1668b8" />
          <path d="M3 8h18v8H3z" fill="#f4f8fc" />
          <path d="M1 8l11 8 11-8v15H1z" fill="#28a0e4" />
          <path d="M1 23l11-8 11 8z" fill="#3cb8f4" />
        </TaskButton>
        <TaskButton name="Capture" open>
          <ellipse cx="12" cy="8" rx="10" ry="6.500" transform="rotate(-25 12 8)" fill="#f0f0f0" stroke="#d02c2c" strokeWidth="1.500" />
          <path d="M6 10c4-4 8-5 12-4M15 7l3 10M20 8l-6 9" stroke="#999" strokeWidth="1.500" />
          <circle cx="14" cy="19" r="2.200" stroke="#2c80c8" strokeWidth="1.500" />
          <circle cx="20" cy="18" r="2.200" stroke="#2c80c8" strokeWidth="1.500" />
        </TaskButton>
        <TaskButton name="ProRealTime" open active>
          <path d="M8 8v14M18 2v18" stroke="#222" />
          <rect x="4" y="11" width="7" height="10" fill="#ee6468" stroke="#b03a3e" />
          <rect x="15" y="5" width="7" height="14" fill="#4cdc54" stroke="#2a9a30" />
        </TaskButton>
      </div>
      <div className="ml-auto flex flex-col items-center justify-center pr-[7px] font-['Open_Sans',sans-serif] text-[10px] leading-[17px] text-white">
        <span>16:53</span>
        <span>16/08/2022</span>
      </div>
    </footer>
  );
}

export default function App() {
  return (
    <div className="flex h-screen flex-col overflow-hidden bg-white font-['Liberation_Sans',Arial,sans-serif] text-black">
      <TitleBar />
      <div className="flex min-h-0 flex-1">
        <Sidebar />
        <main className="flex min-w-0 flex-1 flex-col">
          <AccountBar />
          <PriceChart />
          <RsiChart />
          <TimeAxis />
        </main>
      </div>
      <Toolbar />
      <Taskbar />
    </div>
  );
}
